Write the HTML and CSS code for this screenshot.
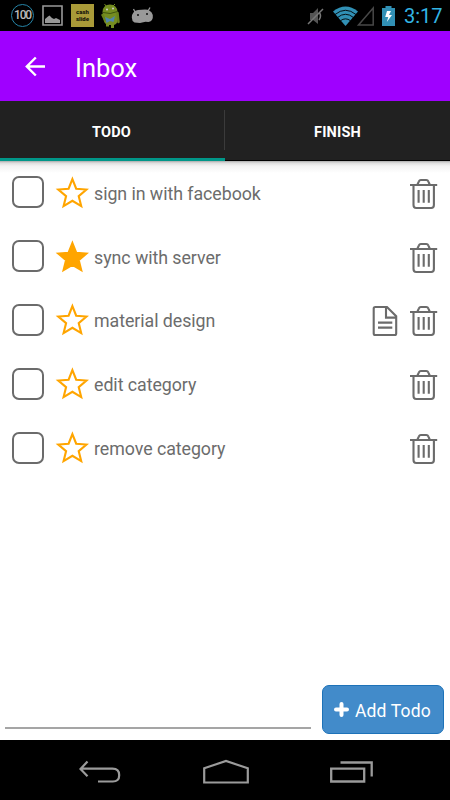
FILE: index.html
```html
<!DOCTYPE html>
<html lang="en">
<head>
<meta charset="utf-8">
<title>Inbox</title>
<link rel="stylesheet" href="styles.css">
</head>
<body>
<svg class="defs" width="0" height="0" aria-hidden="true">
  <symbol id="star" viewBox="0 0 34 34"><path d="M17.4 3.2 21.2 12.7 31.5 13.5 23.7 20.1 26.2 30.1 17.4 24.8 8.6 30.1 11.1 20.1 3.3 13.5 13.6 12.7Z"/></symbol>
  <symbol id="trash" viewBox="0 0 28 32"><path d="M0 7H27.2M7.5 6.5 8.9 3.3Q9.4 2 10.9 2H16.3Q17.8 2 18.3 3.3L19.7 6.5M3.5 7.5V27Q3.5 30 6.2 30H21.2Q23.9 30 23.9 27V7.5M8.6 12V24.8M13.7 12V24.8M18.8 12V24.8"/></symbol>
  <symbol id="note" viewBox="0 0 26 32"><path d="M2.8 2H15L24.2 11.2V28.5Q24.2 30 22.7 30H3.2Q1.7 30 1.7 28.5V3.5Q1.7 2 3.2 2M14 2V12.6H24.2M6 17.6H20.3M6 22.6H20.3"/></symbol>
</svg>
<div class="screen">
  <header class="status">
    <div class="notifications">
      <span class="battery-level">100</span>
      <svg width="21" height="21" viewBox="0 0 21 21"><path d="M1 1H20V20H1Z" fill="none" stroke="#999" stroke-width="1.6"/><path d="M3 18V14L6 11.5 7.5 10.5 10 13 12 14 14 13 16 14 18 15V18Z" fill="#999"/></svg>
      <span class="cash">cash<br>slide</span>
      <svg class="robot" width="20" height="26" viewBox="0 0 20 26"><path d="M5 3 3.5 1M12 3 14 1" stroke="#758d20"/><path d="M1.5 9Q2 1.5 9 1.5T16.5 9V17Q16.5 21 13 22V25H10V22H8V23.5H5V21Q3 20 2.5 16Z" fill="#758d20"/><path d="M1.5 12 4 17M16.5 10 17.5 19" stroke="#6a821b" stroke-width="2.5" stroke-linecap="round"/><path d="M2 9.5Q9 12 16.5 8.5" fill="none" stroke="#40530f"/><circle cx="6" cy="6.5" r="1" fill="#ccc"/><circle cx="12" cy="5.5" r="1" fill="#ccc"/><path d="M4 14 9 16 14 13 12.5 19 9 18 5.5 20Z" fill="#5185ac"/></svg>
      <svg class="face" width="23" height="17" viewBox="0 0 23 17"><path d="M4 5 2.5 2M17 4 19 0.5" stroke="#999" stroke-width="1.3"/><path d="M0.8 10.5Q1 4 7 3L14 2.5Q20 2.5 21.8 8 22.5 14 17.5 15L14.5 14.7 9 16 3.5 15.5Q0.8 14 0.8 10.5Z" fill="#999"/><circle cx="7" cy="8" r="1" fill="#111"/><circle cx="16" cy="7" r="1" fill="#111"/></svg>
    </div>
    <div class="system">
      <svg class="mute" width="18" height="20" viewBox="0 0 18 20"><path d="M3 7H6L11 2V18L6 14H3Z" fill="#555"/><path d="M12 6Q15 10 12 14M1 18 16 3" fill="none" stroke="#777" stroke-width="1.5"/></svg>
      <svg class="wifi" width="25" height="20" viewBox="0 0 25 20"><path d="M0 5.5Q12.5-4.5 25 5.5L12.5 20Z" fill="#3190b5"/><path d="M2 8.5Q12.5 0 23 8.5M4.5 11.5Q12.5 5 20.5 11.5M7.5 14.7Q12.5 11 17.5 14.7" fill="none" stroke="#000" stroke-width="0.9"/></svg>
      <svg class="signal" width="18" height="20" viewBox="0 0 18 20"><path d="M1.5 19 16.2 2V19Z" fill="none" stroke="#484848" stroke-width="1.5"/></svg>
      <svg class="charge" width="13" height="20" viewBox="0 0 13 20"><path d="M0 2H3.5V0H9.5V2H13V20H0Z" fill="#3190b5"/><path d="M5 5 3.2 11H6.3L4.8 16 10 9H7L9 5Z" fill="#fff"/></svg>
      <span class="clock">3:17</span>
    </div>
  </header>
  <div class="appbar">
    <svg width="22" height="22" viewBox="0 0 22 22"><path d="M10.8 1.5 1.8 10.5 10.8 19.5M2 10.5H20" fill="none" stroke="#fff" stroke-width="2.4"/></svg>
    <h1>Inbox</h1>
  </div>
  <nav class="tabs">
    <div class="tab active">TODO</div>
    <div class="tab">FINISH</div>
  </nav>
  <main class="content">
    <ul class="list">
      <li><span class="check"></span><svg class="star"><use href="#star"/></svg><span class="label">sign in with facebook</span><svg class="trash"><use href="#trash"/></svg></li>
      <li><span class="check"></span><svg class="star full"><use href="#star"/></svg><span class="label">sync with server</span><svg class="trash"><use href="#trash"/></svg></li>
      <li><span class="check"></span><svg class="star"><use href="#star"/></svg><span class="label">material design</span><svg class="note"><use href="#note"/></svg><svg class="trash"><use href="#trash"/></svg></li>
      <li><span class="check"></span><svg class="star"><use href="#star"/></svg><span class="label">edit category</span><svg class="trash"><use href="#trash"/></svg></li>
      <li><span class="check"></span><svg class="star"><use href="#star"/></svg><span class="label">remove category</span><svg class="trash"><use href="#trash"/></svg></li>
    </ul>
    <div class="composer">
      <div class="input"></div>
      <div class="add"><svg width="15" height="15" viewBox="0 0 15 15"><path d="M7.5 2V13M2 7.5H13" stroke="#fff" stroke-width="4" stroke-linecap="round"/></svg><span>Add Todo</span></div>
    </div>
  </main>
  <footer class="navbar">
    <svg width="42" height="24" viewBox="0 0 42 24"><path d="M8.5 1.5 1.5 9 8.5 16.2M2 8.7H33.5Q40.2 8.7 40.2 15.2T33.5 21.5H19" fill="none" stroke="#9b9b9b" stroke-width="2.2"/></svg>
    <svg width="46" height="26" viewBox="0 0 46 26"><path d="M1.2 9.3 23 2 44.8 9.3V23.5H1.2Z" fill="none" stroke="#9b9b9b" stroke-width="2.2"/></svg>
    <svg width="44" height="24" viewBox="0 0 44 24"><path d="M1.2 8.7H34.2V21.5H1.2ZM10.5 2.5H41.7V16.5" fill="none" stroke="#9b9b9b" stroke-width="2.3"/></svg>
  </footer>
</div>
</body>
</html>
```
FILE: styles.css
```css
* { box-sizing: border-box; }
body { margin: 0; font-family: Roboto, sans-serif; background: #fff; }
.defs { display: block; }
svg { flex: none; display: block; }
.screen { width: 450px; height: 800px; display: flex; flex-direction: column; overflow: hidden; }
.status { height: 31px; flex: none; background: #000; display: flex; justify-content: space-between; }
.notifications, .system { display: flex; align-items: center; }
.notifications { padding-left: 11px; }
.battery-level { width: 23px; height: 23px; margin-right: 8px; border: 1.5px solid #2685a8; border-radius: 50%; color: #bbb; font-size: 12px; font-weight: 500; letter-spacing: -1.2px; line-height: 21px; text-align: center; }
.cash { width: 23px; height: 23px; margin-left: 8px; background: #a99a38; color: #17150a; font-size: 6px; font-weight: 900; line-height: 7px; padding-top: 4px; text-align: center; }
.robot { margin-left: 7px; }
.face { margin-left: 10px; }
.system { padding-right: 7px; }
.mute { margin-top: 1px; }
.wifi { margin-left: 8px; }
.signal { margin-left: -1px; }
.charge { margin-left: 7px; }
.clock { width: 39px; margin: 1px 0 0 9px; color: #33b5e5; font-size: 20px; line-height: 30px; white-space: nowrap; }
.appbar { height: 70px; flex: none; background: #9f00ff; color: #fff; display: flex; align-items: center; padding: 1px 0 0 25px; }
.appbar h1 { margin: 3px 0 0 28px; font-size: 25.5px; font-weight: 400; line-height: 32px; }
.tabs { height: 60px; flex: none; background: #212121; display: flex; }
.tab { flex: 1; display: flex; align-items: center; justify-content: center; padding-top: 3px; color: #fff; font-size: 14.5px; font-weight: 700; letter-spacing: 0.2px; border-bottom: 1px solid #000; }
.tab.active { flex: 0 0 225px; border-bottom: 3px solid #009688; padding: 5px 2px 0 0; background: linear-gradient(#3b3b3b, #3b3b3b) 224px 9px / 1px 40px no-repeat; }
.content { flex: 1; display: flex; flex-direction: column; justify-content: space-between; background: linear-gradient(#aaa 0, #ddd 2px, #f2f2f2 5px, #fff 12px); }
.list { list-style: none; margin: 0; padding: 0 12px; }
.list li { height: 63.8px; display: flex; align-items: center; color: #6c6c6c; }
.check { width: 32px; height: 32px; flex: none; margin-top: -1px; border: 2px solid #6b6b6b; border-radius: 7px; }
.star { width: 34px; height: 34px; margin-left: 11px; fill: none; stroke: #ffa500; stroke-width: 2.1; }
.star.full { fill: #ffa500; }
.label { flex: 1; margin: 2px 0 0 5px; font-size: 17.8px; letter-spacing: -0.05px; line-height: 24px; }
.trash { width: 28px; height: 32px; margin-top: 2px; fill: none; stroke: #6b6b6b; stroke-width: 2.1; }
.note { width: 26px; height: 32px; margin: 2px 12px 0 0; fill: none; stroke: #6b6b6b; stroke-width: 2.1; }
.composer { display: flex; align-items: flex-end; justify-content: space-between; padding: 0 6px 6px 5px; }
.input { width: 306px; height: 43px; margin-bottom: 5px; border-bottom: 2px solid #a5a5a5; }
.add { width: 122px; height: 49px; border: 1px solid #1d72b8; border-radius: 7px; background: #428bca; color: #fff; display: flex; align-items: center; padding-left: 11px; font-size: 17.5px; letter-spacing: 0.15px; }
.add span { margin: 2px 0 0 6px; white-space: nowrap; }
.add svg { margin-top: -1px; }
.navbar { height: 60px; flex: none; background: #000; display: flex; align-items: center; justify-content: space-between; padding: 3px 76px 0 79px; }
```
